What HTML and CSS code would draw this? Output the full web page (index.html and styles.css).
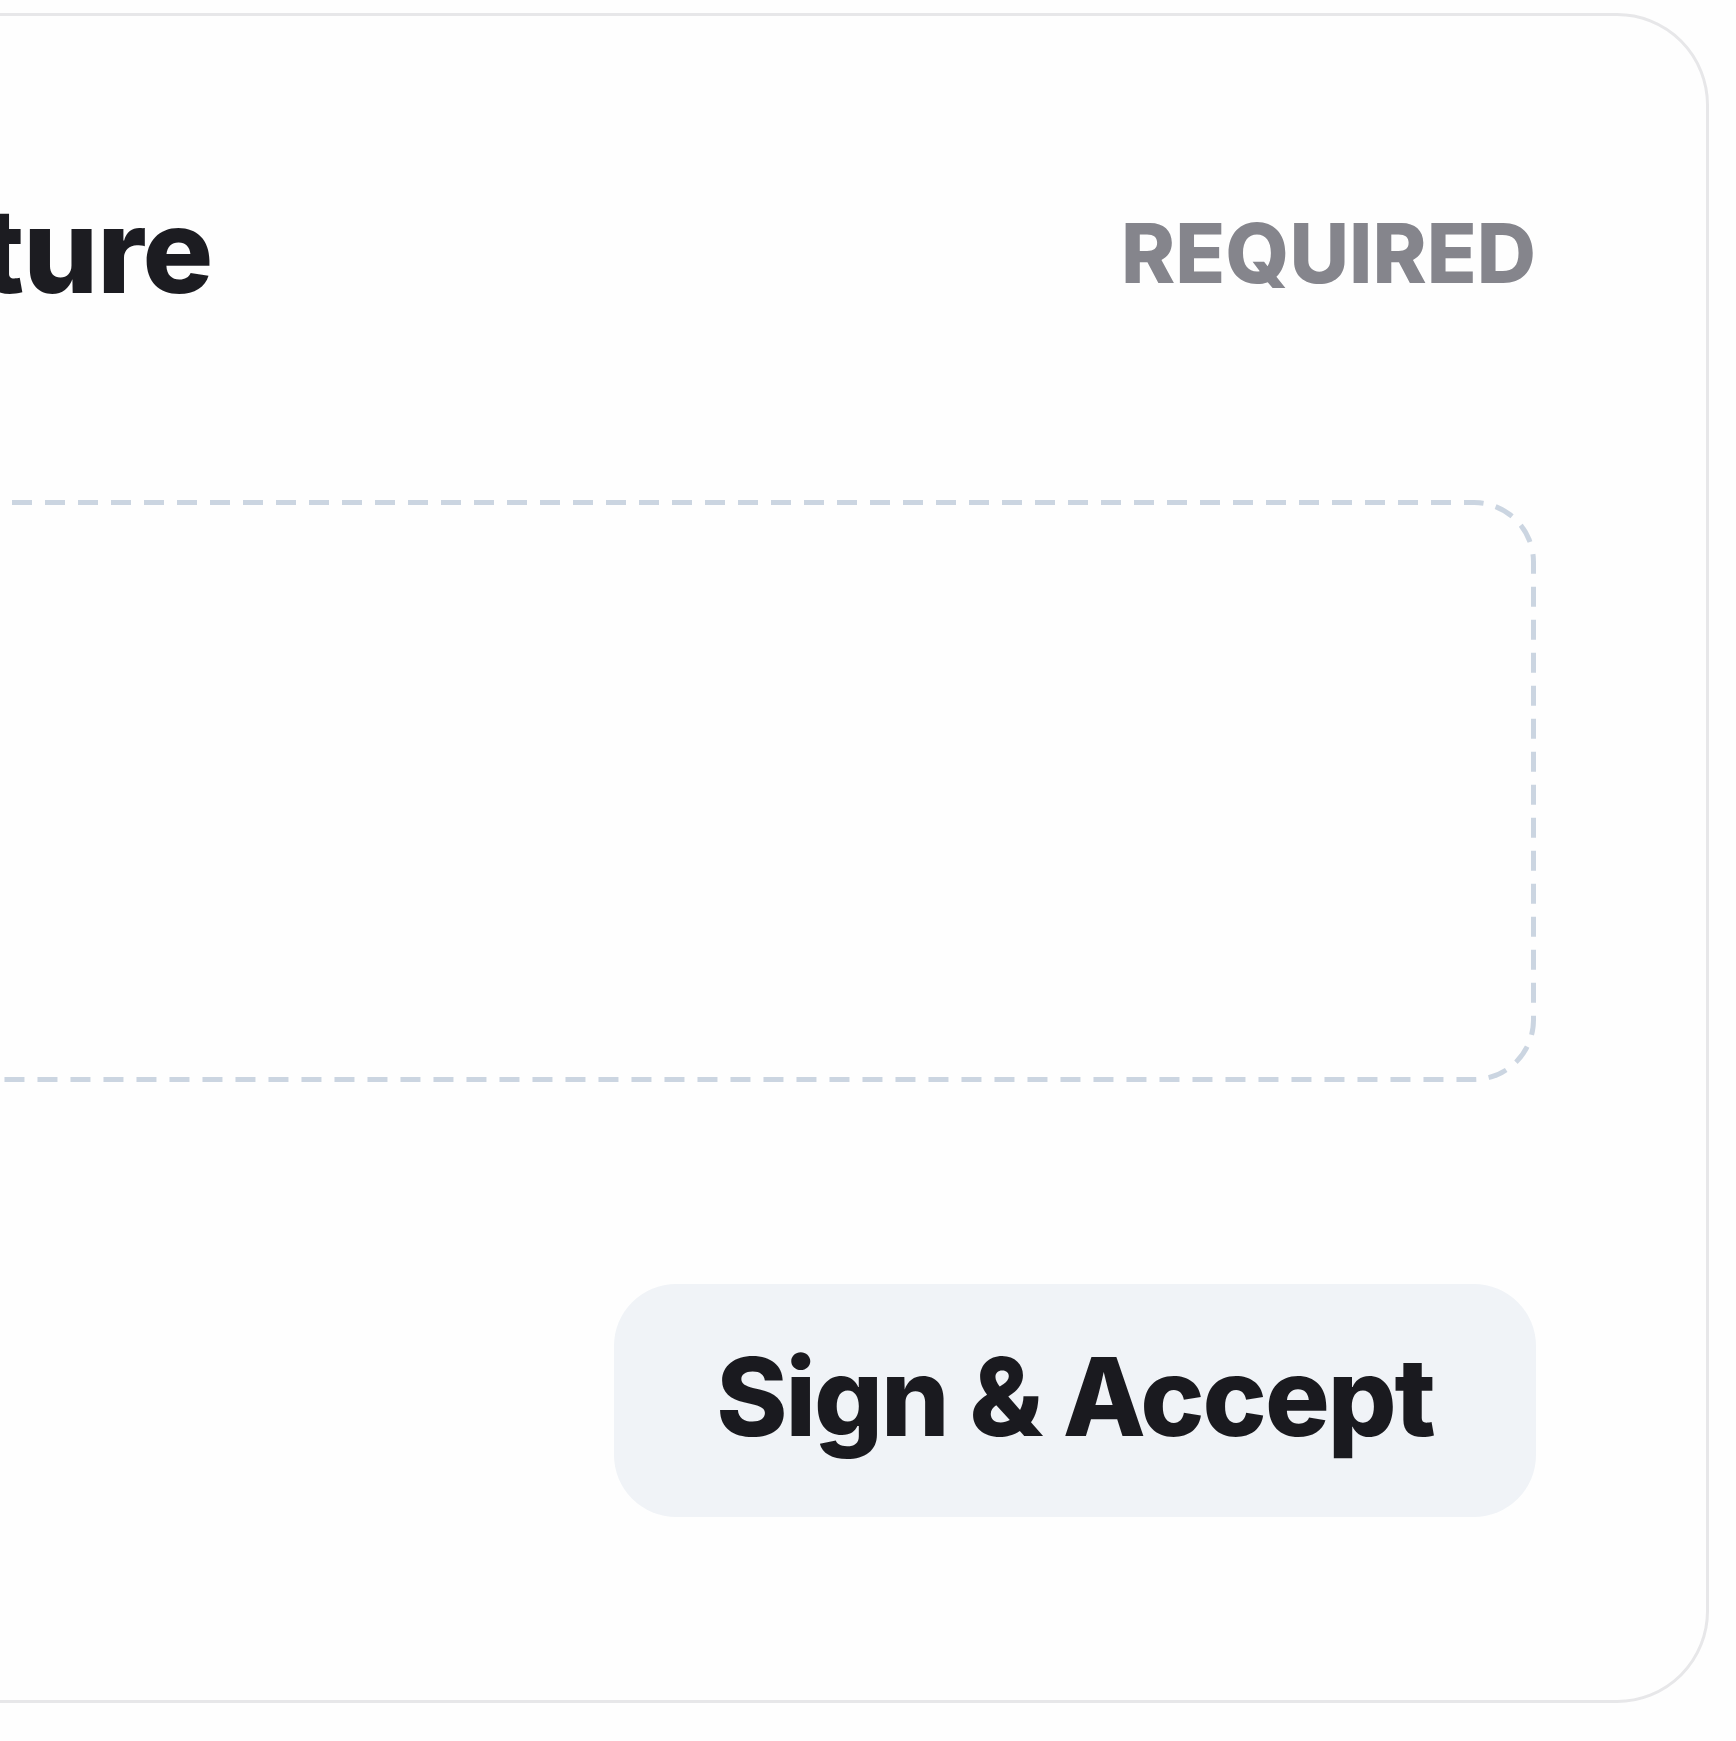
FILE: index.html
```html
<!DOCTYPE html>
<html lang="en">
<head>
  <meta charset="UTF-8">
  <meta name="viewport" content="width=device-width, initial-scale=1.0">
  <title>Signature</title>
  <link rel="stylesheet" href="styles.css">
</head>
<body>
  <div class="page">
    <div class="card">
      <div class="card-header">
        <h2 class="card-title">Signature</h2>
        <span class="badge">Required</span>
      </div>

      <div class="signature-pad" id="signature-pad"></div>

      <div class="actions">
        <button type="button" class="btn-sign">Sign &amp; Accept</button>
      </div>
    </div>
  </div>
</body>
</html>
```

FILE: styles.css
```css
html, body {
  margin: 0;
  padding: 0;
  background: #fefefe;
  overflow: hidden;
}
body {
  font-family: Inter, "Noto Sans", Arial, sans-serif;
  color: #1c1c21;
}
.page {
  padding-top: 13px;
  width: 1709px;
}
.card {
  margin-left: -550px;
  background: #fefefe;
  border: 3px solid #e7e7e9;
  border-radius: 92px;
  padding: 148px 170px 183px 200px;
}
.card-header {
  display: flex;
  justify-content: space-between;
  align-items: center;
  height: 172px;
}
.card-title {
  margin: 0;
  font-size: 118px;
  font-weight: 800;
  letter-spacing: -1px;
  color: #1c1c21;
}
.badge {
  padding-top: 7px;
  font-size: 82px;
  font-weight: 800;
  text-transform: uppercase;
  letter-spacing: 0;
  color: #85858c;
}
/* dashed outline drawn as svg so the dash length can be set */
.signature-pad {
  margin-top: 164px;
  height: 582px;
  border-radius: 62px;
  background-image: url("data:image/svg+xml,%3csvg xmlns='http://www.w3.org/2000/svg'%3e%3crect width='100%25' height='100%25' fill='none' rx='62' ry='62' stroke='%23CBD5E1' stroke-width='10' stroke-dasharray='20%2c13'/%3e%3c/svg%3e");
}
.actions {
  display: flex;
  justify-content: flex-end;
  margin-top: 202px;
}
.btn-sign {
  width: 922px;
  height: 233px;
  padding: 0 0 8px;
  border: none;
  border-radius: 62px;
  background: #f0f3f7;
  color: #1a1a1f;
  font-family: inherit;
  font-size: 108px;
  font-weight: 800;
  letter-spacing: -2px;
  cursor: pointer;
}
```
